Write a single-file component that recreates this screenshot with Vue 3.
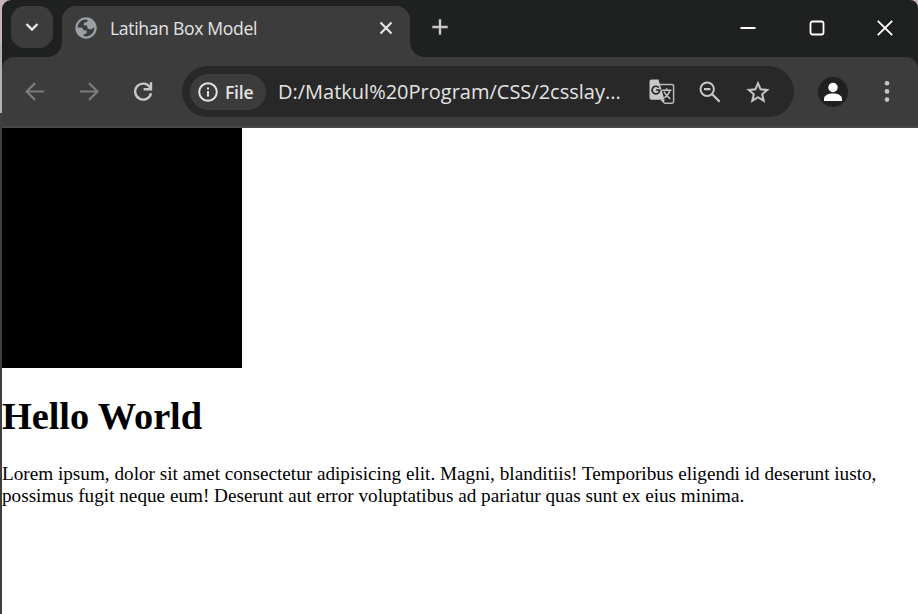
<script setup>
const url = 'D:/Matkul%20Program/CSS/2csslay...'
</script>

<template>
  <div class="screen">
    <div class="edge"><i class="pink"></i><i class="grey"></i></div>
    <div class="window">
      <header class="titlebar">
        <button class="search">
          <svg width="14" height="10" viewBox="0 0 14 10"><path d="M1.500 2l5.500 5.500L12.500 2" fill="none" stroke="#e6e6e6" stroke-width="2.400" /></svg>
        </button>
        <div class="tab">
          <svg class="globe" width="22" height="22" viewBox="0 0 22 22">
            <circle cx="11" cy="11" r="10.700" fill="#9aa0a6" />
            <path d="M2.600 10.500C2.800 6.500 6 3 10.400 2.600L12.800 2.900 12.200 4.800 9 5.700 8.600 8.200 12 8.500 12.800 11.800 16.200 12.400 19.300 10.200C19.600 15 16 19.200 11.300 19.400L8.800 19 8.600 17.200 11.400 16.400 11.800 13.600 8.300 13.300 7.400 10.700Z" fill="#3c3c3c" />
          </svg>
          <span class="tab-title">Latihan Box Model</span>
          <svg class="tab-close" width="14" height="14" viewBox="0 0 14 14"><path d="M1.500 1.500l11 11M12.500 1.500l-11 11" stroke="#e3e3e3" stroke-width="2.200" /></svg>
        </div>
        <svg class="plus" width="16" height="16" viewBox="0 0 16 16"><path d="M8 0.300v15.400M0.300 8h15.400" stroke="#c7c7c7" stroke-width="2.400" /></svg>
        <div class="controls">
          <svg width="16" height="16" viewBox="0 0 16 16"><path d="M.5 8h15" stroke="#fff" stroke-width="2" /></svg>
          <svg width="16" height="16" viewBox="0 0 16 16"><rect x="1.500" y="1.500" width="13" height="13" rx="2" fill="none" stroke="#fff" stroke-width="1.800" /></svg>
          <svg width="16" height="16" viewBox="0 0 16 16"><path d="M.8.8l14.400 14.400M15.200.8L.8 15.200" stroke="#fff" stroke-width="1.900" /></svg>
        </div>
      </header>
      <nav class="toolbar">
        <svg class="nav" width="20" height="20" viewBox="0 0 20 20"><path d="M19 10.500H2M10 2.100l-8.400 8.400 8.400 8.400" fill="none" stroke="#7b7b7b" stroke-width="2.200" /></svg>
        <svg class="nav" width="20" height="20" viewBox="0 0 20 20"><path d="M1 10.500h17M10 2.100l8.400 8.400-8.400 8.400" fill="none" stroke="#7b7b7b" stroke-width="2.200" /></svg>
        <svg class="nav" width="20" height="20" viewBox="0 0 20 20"><path d="M17.200 6.800A8 8 0 1 0 18 12.200" fill="none" stroke="#c7c7c7" stroke-width="2.400" /><path d="M18 1.200v7h-7.400" fill="none" stroke="#c7c7c7" stroke-width="2.400" /></svg>
        <div class="omnibox">
          <div class="chip">
            <svg width="20" height="20" viewBox="0 0 20 20"><circle cx="10" cy="10" r="8.800" fill="none" stroke="#e3e3e3" stroke-width="2" /><path d="M10 9v5.500M10 5.500v2" stroke="#e3e3e3" stroke-width="2" /></svg>
            <span>File</span>
          </div>
          <span class="url">{{ url }}</span>
          <svg class="translate" width="26" height="26" viewBox="0 0 26 26">
            <path d="M11 5.500h12a1.600 1.600 0 0 1 1.600 1.600v15.500a1.600 1.600 0 0 1-1.600 1.600H15" fill="none" stroke="#b9b9b9" stroke-width="1.500" />
            <path d="M2.500.5H9.500L15.500 20.700H2.500A2 2 0 0 1 .5 18.700V2.500A2 2 0 0 1 2.500.5Z" fill="#c7c7c7" />
            <path d="M11.300 20.700h4.200l-.5 3.800Z" fill="#c7c7c7" />
            <path d="M9.800 8.600A3.800 3.800 0 1 0 10.700 11H7" fill="none" stroke="#282828" stroke-width="1.700" />
            <path d="M13.200 11.300h9.300M17.600 9.300v2M20.800 11.300c-.8 3.300-2.900 5.800-5.400 7.500M15 12.600c1.500 2.900 3.800 5 6.300 7.400" fill="none" stroke="#c7c7c7" stroke-width="1.500" />
          </svg>
          <svg class="mag" width="22" height="22" viewBox="0 0 22 22"><circle cx="8.200" cy="8.200" r="6.700" fill="none" stroke="#c7c7c7" stroke-width="2" /><path d="M13.200 13.200l7.400 7.400M5 8.200h6.400" fill="none" stroke="#c7c7c7" stroke-width="2.200" /></svg>
          <svg class="star" width="24" height="24" viewBox="1.500 1.200 21 21"><path d="M22 9.240l-7.190-.62L12 2 9.190 8.630 2 9.240l5.460 4.730L5.820 21 12 17.270 18.180 21l-1.630-7.030L22 9.240zM12 15.400l-3.760 2.270 1-4.280-3.320-2.880 4.380-.38L12 6.100l1.710 4.040 4.380.38-3.320 2.880 1 4.280L12 15.400z" fill="#c7c7c7" stroke="#c7c7c7" stroke-width=".2" /></svg>
        </div>
        <div class="avatar">
          <svg width="30" height="30" viewBox="0 0 30 30"><circle cx="15" cy="10.500" r="4.700" fill="#fff" /><path d="M6 24v-2.200C6 18.400 10.500 16.500 15 16.500s9 1.900 9 5.300V24Z" fill="#fff" /></svg>
        </div>
        <svg class="dots" width="6" height="22" viewBox="0 0 6 22"><g fill="#c7c7c7"><circle cx="3" cy="3.200" r="2.300" /><circle cx="3" cy="11.400" r="2.300" /><circle cx="3" cy="19.600" r="2.300" /></g></svg>
      </nav>
      <main class="page">
        <div class="box"></div>
        <h1>Hello World</h1>
        <p>Lorem ipsum, dolor sit amet consectetur adipisicing elit. Magni, blanditiis! Temporibus eligendi id deserunt iusto, possimus fugit neque eum! Deserunt aut error voluptatibus ad pariatur quas sunt ex eius minima.</p>
      </main>
    </div>
  </div>
</template>

<style>
body { overflow: hidden; }
</style>

<style scoped>
.screen { display: flex; width: 918px; height: 614px; background: linear-gradient(#c9b4bd 0 20px, #3c3c3c 20px); overflow: hidden; }
.edge { width: 2px; flex: none; background: #3f3f3f; }
.edge i { display: block; }
.pink { height: 43px; background: #cbb3bd; }
.grey { height: 70px; background: #b2b2b2; }
.window { width: 916px; flex: none; background: #1f2120; border-radius: 9px 8px 0 0; overflow: hidden; }
svg { display: block; flex: none; }
.titlebar { display: flex; height: 57px; align-items: flex-start; }
.search { margin: 6px 0 0 9px; width: 42px; height: 42px; border: 0; padding: 0; border-radius: 14px; background: #3c3c3c; display: flex; align-items: center; justify-content: center; }
.tab { position: relative; margin: 6px 0 0 9px; width: 348px; height: 51px; box-sizing: border-box; padding: 0 17px 8px 13px; border-radius: 14px 14px 0 0; background: #3c3c3c; display: flex; align-items: center; }
.tab::before, .tab::after { content: ''; position: absolute; bottom: 0; width: 14px; height: 14px; }
.tab::before { left: -14px; background: radial-gradient(circle at 0 0, transparent 13.500px, #3c3c3c 14px); }
.tab::after { right: -14px; background: radial-gradient(circle at 100% 0, transparent 13.500px, #3c3c3c 14px); }
.tab-title { margin-left: 13px; flex: 1; white-space: nowrap; color: #e3e3e3; font: 17.600px/24px 'Open Sans', sans-serif; letter-spacing: -.34px; }
.plus { margin: 19px 0 0 22px; }
.controls { display: flex; gap: 52.500px; margin: 20px 25px 0 auto; }
.toolbar { display: flex; align-items: center; height: 71px; box-sizing: border-box; padding: 0 0 1px 23px; background: #3c3c3c; border-radius: 12px 12px 0 0; border-bottom: 2px solid #474747; }
.nav { margin-right: 34px; }
.omnibox { display: flex; align-items: center; width: 612px; height: 51px; margin-left: -5px; margin-top: 1px; box-sizing: border-box; padding-left: 8px; border-radius: 26px; background: #282828; }
.chip { display: flex; align-items: center; width: 76px; height: 36px; box-sizing: border-box; padding-left: 7.500px; gap: 7.500px; border-radius: 18px; background: #3c3c3c; color: #e3e3e3; font: 600 17.600px/24px 'Open Sans', sans-serif; letter-spacing: -.25px; }
.url { width: 371px; margin-left: 12px; color: #e3e3e3; font: 20px/28px 'Open Sans', sans-serif; white-space: nowrap; }
.mag { margin-left: 24px; }
.star { margin-left: 25px; }
.avatar { width: 30px; height: 30px; margin-left: 24px; margin-top: 2px; border-radius: 50%; background: #1f2120; }
.dots { margin-left: 36px; }
.page { height: 486px; background: #fff; color: #000; font: 19.200px/22px 'Liberation Serif', serif; overflow: hidden; }
.box { width: 240px; height: 240px; background: #000; }
h1 { margin: 26px 0 25px; font-size: 38.400px; line-height: 44px; letter-spacing: -.08px; }
p { margin: 0; width: 900px; }
</style>
